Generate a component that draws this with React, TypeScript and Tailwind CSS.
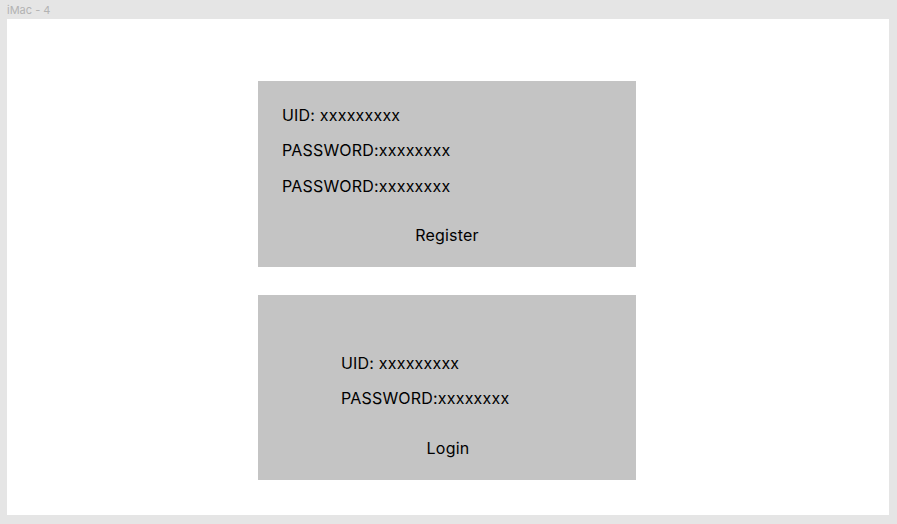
export default function App() {
  return (
    <div
      className="w-[897px] h-[524px] bg-[#e5e5e5] relative overflow-hidden"
      style={{ fontFamily: "Inter, 'Liberation Sans', sans-serif" }}
    >
      <div className="absolute left-[7px] top-[3px] text-[11px] leading-[14px] text-[#b3b3b3]">iMac - 4</div>
      <div className="absolute left-[7px] top-[19px] w-[882px] h-[496px] bg-white">
        <div className="flex flex-col pl-[251px] pt-[62px] gap-[28px]">
          {/* Register card */}
          <div className="w-[378px] h-[186px] bg-[#c4c4c4] flex flex-col pt-[24px] text-[16px] leading-[20px] tracking-[0.2px] text-black">
            <div className="pl-[24px]">UID: xxxxxxxxx</div>
            <div className="pl-[24px] mt-[15px]">PASSWORD:xxxxxxxx</div>
            <div className="pl-[24px] mt-[16px]">PASSWORD:xxxxxxxx</div>
            <div className="mt-[29px] text-center">Register</div>
          </div>

          {/* Login card */}
          <div className="w-[378px] h-[185px] bg-[#c4c4c4] flex flex-col pt-[58px] text-[16px] leading-[20px] tracking-[0.2px] text-black">
            <div className="pl-[83px]">UID: xxxxxxxxx</div>
            <div className="pl-[83px] mt-[15px]">PASSWORD:xxxxxxxx</div>
            <div className="mt-[30px] text-center pl-[2px]">Login</div>
          </div>
        </div>
      </div>
    </div>
  );
}
